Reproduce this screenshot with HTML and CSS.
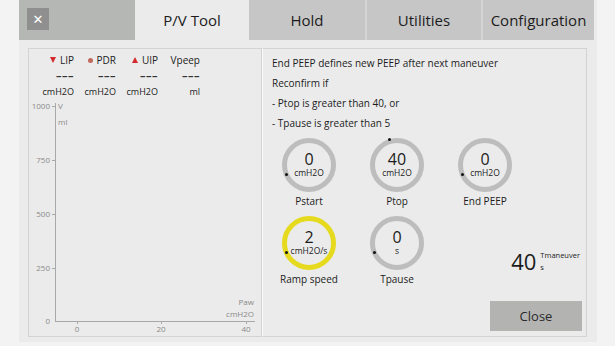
FILE: index.html
```html
<!DOCTYPE html>
<html lang="en">
<head>
    <meta charset="utf-8">
    <title>P/V Tool</title>
    <link rel="stylesheet" href="styles.css">
</head>
<body>

<div class="window">
    <!-- Tab bar -->
    <div class="tabbar">
        <div class="close-area">
            <div class="x-btn">&#x2715;</div>
        </div>
        <div class="tab tab-pv active">P/V Tool</div>
        <div class="tab tab-hold">Hold</div>
        <div class="tab tab-util">Utilities</div>
        <div class="tab tab-conf">Configuration</div>
    </div>

    <div class="content">
        <!-- Left: curve panel -->
        <div class="panel curve-panel">
            <div class="stats">
                <div class="stat-label"><span class="tri-down"></span>LIP</div>
                <div class="stat-label"><span class="pdr-dot"></span>PDR</div>
                <div class="stat-label"><span class="tri-up"></span>UIP</div>
                <div class="stat-label">Vpeep</div>

                <div class="stat-dash">&ndash;&ndash;&ndash;</div>
                <div class="stat-dash">&ndash;&ndash;&ndash;</div>
                <div class="stat-dash">&ndash;&ndash;&ndash;</div>
                <div class="stat-dash">&ndash;&ndash;&ndash;</div>

                <div class="stat-unit">cmH2O</div>
                <div class="stat-unit">cmH2O</div>
                <div class="stat-unit">cmH2O</div>
                <div class="stat-unit">ml</div>
            </div>

            <svg class="chart" width="232" height="236" viewBox="0 0 232 236">
                <g class="axis">
                    <line x1="26.5" y1="4" x2="26.5" y2="222.5"/>
                    <line x1="26" y1="222.5" x2="226" y2="222.5"/>
                    <line x1="23" y1="7.5" x2="26" y2="7.5"/>
                    <line x1="23" y1="61.5" x2="26" y2="61.5"/>
                    <line x1="23" y1="115.5" x2="26" y2="115.5"/>
                    <line x1="23" y1="169.5" x2="26" y2="169.5"/>
                    <line x1="48.5" y1="222" x2="48.5" y2="225"/>
                    <line x1="132.5" y1="222" x2="132.5" y2="225"/>
                    <line x1="217.5" y1="222" x2="217.5" y2="225"/>
                </g>
                <g class="tick-text">
                    <text x="21" y="10" text-anchor="end">1000</text>
                    <text x="21" y="64" text-anchor="end">750</text>
                    <text x="21" y="118" text-anchor="end">500</text>
                    <text x="21" y="172" text-anchor="end">250</text>
                    <text x="21" y="225" text-anchor="end">0</text>
                    <text x="48" y="233" text-anchor="middle">0</text>
                    <text x="132" y="233" text-anchor="middle">20</text>
                    <text x="217" y="233" text-anchor="middle">40</text>
                    <text x="29" y="10">V</text>
                    <text x="29" y="26">ml</text>
                    <text x="225" y="206" text-anchor="end">Paw</text>
                    <text x="225" y="218" text-anchor="end">cmH2O</text>
                </g>
            </svg>
        </div>

        <!-- Right: settings panel -->
        <div class="panel settings-panel">
            <div class="note">
                <p>End PEEP defines new PEEP after next maneuver</p>
                <p>Reconfirm if</p>
                <p>- Ptop is greater than 40, or</p>
                <p>- Tpause is greater than 5</p>
            </div>

            <div class="knob-area">
                <div class="knob-grid">
                    <div class="knob-cell">
                        <div class="knob"><span class="dot dot-min"></span>
                            <div class="knob-val">0</div>
                            <div class="knob-unit">cmH2O</div>
                        </div>
                        <div class="knob-label">Pstart</div>
                    </div>
                    <div class="knob-cell">
                        <div class="knob"><span class="dot dot-max"></span>
                            <div class="knob-val">40</div>
                            <div class="knob-unit">cmH2O</div>
                        </div>
                        <div class="knob-label">Ptop</div>
                    </div>
                    <div class="knob-cell">
                        <div class="knob"><span class="dot dot-min"></span>
                            <div class="knob-val">0</div>
                            <div class="knob-unit">cmH2O</div>
                        </div>
                        <div class="knob-label">End PEEP</div>
                    </div>
                    <div class="knob-cell">
                        <div class="knob knob-active"><span class="dot dot-min"></span>
                            <div class="knob-val">2</div>
                            <div class="knob-unit">cmH2O/s</div>
                        </div>
                        <div class="knob-label">Ramp speed</div>
                    </div>
                    <div class="knob-cell">
                        <div class="knob"><span class="dot dot-min"></span>
                            <div class="knob-val">0</div>
                            <div class="knob-unit">s</div>
                        </div>
                        <div class="knob-label">Tpause</div>
                    </div>
                    <div class="timer">
                        <span class="timer-val">40</span>
                        <span class="timer-info">
                            <span>Tmaneuver</span>
                            <span>s</span>
                        </span>
                    </div>
                </div>

                <button class="close-btn">Close</button>
            </div>
        </div>
    </div>
</div>

</body>
</html>
```

FILE: styles.css
```css
body {
    margin: 0;
    padding: 0;
    background-color: #f3f3f3;
    font-family: "Open Sans", "Noto Sans", sans-serif;
    color: #1c1c1c;
}

.window {
    margin-left: 19px;
    width: 578px;
    height: 342px;
    background-color: #ebebeb;
}

/* Tab bar */
.tabbar {
    display: flex;
    height: 40px;
    width: 575px;
}

.close-area {
    width: 116px;
    padding: 8px;
    box-sizing: border-box;
    background-color: #b5b7b5;
}

.x-btn {
    width: 22px;
    height: 22px;
    background-color: #8f8f8f;
    color: #fff;
    font-size: 13px;
    font-weight: 700;
    display: flex;
    align-items: center;
    justify-content: center;
    font-family: "DejaVu Sans", sans-serif;
}

.tab {
    display: flex;
    align-items: center;
    justify-content: center;
    box-sizing: border-box;
    font-size: 15px;
    background-color: #c6c6c6;
    border-left: 2px solid #d4d4d4;
    color: #1c1c1c;
}

.tab-pv { width: 114px; }
.tab-hold { width: 116px; }
.tab-util { width: 116px; }
.tab-conf { width: 113px; }

.tab.active {
    background-color: #ebebeb;
    border-left: none;
}

.tab-hold {
    border-left: none;
}

/* Content */
.content {
    display: flex;
    padding: 8px 0 0 9px;
}

.panel {
    box-sizing: border-box;
    height: 289px;
    border: 1px solid #d3d3d3;
}

.curve-panel {
    width: 234px;
}

.settings-panel {
    width: 325px;
    border-left: 1px solid #fafafa;
    display: flex;
    flex-direction: column;
}

/* Stats header */
.stats {
    display: grid;
    grid-template-columns: repeat(4, 42px);
    padding: 4px 0 0 3px;
    font-size: 10px;
    text-align: right;
}

.stat-label {
    line-height: 14px;
    display: flex;
    align-items: center;
    justify-content: flex-end;
}

.stat-dash {
    line-height: 15px;
    font-size: 11px;
    font-weight: 700;
    letter-spacing: 0.5px;
    color: #333;
}

.stat-unit {
    font-size: 9px;
    line-height: 14px;
    margin-top: 3px;
}

.tri-down {
    width: 0;
    height: 0;
    border-left: 3.5px solid transparent;
    border-right: 3.5px solid transparent;
    border-top: 6px solid #d42a2e;
    margin-right: 4px;
}

.tri-up {
    width: 0;
    height: 0;
    border-left: 3.5px solid transparent;
    border-right: 3.5px solid transparent;
    border-bottom: 6px solid #d42a2e;
    margin-right: 4px;
}

.pdr-dot {
    width: 5px;
    height: 5px;
    border-radius: 50%;
    background-color: #c0695c;
    margin-right: 4px;
}

.chart {
    display: block;
}

.axis line {
    stroke: #a8a8a8;
    stroke-width: 1;
}

.tick-text text {
    font-family: "Open Sans", sans-serif;
    font-size: 8px;
    fill: #8a8a8a;
}

/* Settings */
.note {
    padding: 4px 0 0 9px;
    font-size: 10px;
}

.note p {
    margin: 0;
    line-height: 20px;
}

.knob-area {
    flex: 1;
    display: flex;
    flex-direction: column;
    padding: 5px 4px 5px 2px;
}

.knob-grid {
    display: grid;
    grid-template-columns: 88px 88px 88px 1fr;
    row-gap: 8px;
}

.knob-cell {
    display: flex;
    flex-direction: column;
    align-items: center;
}

.knob {
    position: relative;
    width: 54px;
    height: 54px;
    box-sizing: border-box;
    border: 5px solid #bdbdbd;
    border-radius: 50%;
    text-align: center;
}

.knob-active {
    border-color: #e6da1e;
}

.knob-val {
    font-size: 16px;
    line-height: 16px;
    margin-top: 8px;
}

.knob-unit {
    font-size: 8.5px;
    line-height: 10px;
    margin-top: 1px;
}

.dot {
    position: absolute;
    width: 3px;
    height: 3px;
    border-radius: 50%;
    background-color: #111;
}

.dot-min {
    left: -2px;
    top: 30px;
}

.dot-max {
    left: 13px;
    top: -5px;
}

.knob-label {
    font-size: 10px;
    line-height: 14px;
    margin-top: 2px;
}

.knob-cell:nth-child(4) {
    grid-column: 1;
}

.timer {
    grid-column: 3 / 5;
    justify-self: end;
    align-self: end;
    display: flex;
    align-items: flex-start;
    margin-bottom: 13px;
    padding-right: 2px;
}

.timer-val {
    font-size: 22px;
    line-height: 24px;
}

.timer-info {
    display: flex;
    flex-direction: column;
    margin-left: 4px;
    font-size: 7.5px;
    line-height: 12px;
}

.close-btn {
    margin-top: auto;
    align-self: flex-end;
    width: 92px;
    height: 30px;
    border: none;
    background-color: #b3b4b2;
    font-family: "Open Sans", sans-serif;
    font-size: 13px;
    color: #2a2a2a;
    padding: 0;
}
```
